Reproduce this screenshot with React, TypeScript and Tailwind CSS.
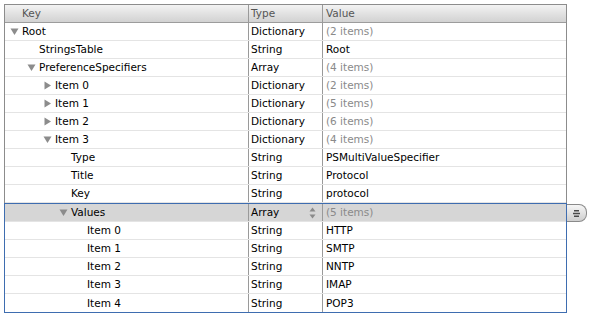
import React from 'react';

type Row = {
  key: string;
  level: number;
  toggle?: 'open' | 'closed';
  type: string;
  value: string;
  dim?: boolean;
};

const topRows: Row[] = [
  { key: 'Root', level: 0, toggle: 'open', type: 'Dictionary', value: '(2 items)', dim: true },
  { key: 'StringsTable', level: 1, type: 'String', value: 'Root' },
  { key: 'PreferenceSpecifiers', level: 1, toggle: 'open', type: 'Array', value: '(4 items)', dim: true },
  { key: 'Item 0', level: 2, toggle: 'closed', type: 'Dictionary', value: '(2 items)', dim: true },
  { key: 'Item 1', level: 2, toggle: 'closed', type: 'Dictionary', value: '(5 items)', dim: true },
  { key: 'Item 2', level: 2, toggle: 'closed', type: 'Dictionary', value: '(6 items)', dim: true },
  { key: 'Item 3', level: 2, toggle: 'open', type: 'Dictionary', value: '(4 items)', dim: true },
  { key: 'Type', level: 3, type: 'String', value: 'PSMultiValueSpecifier' },
  { key: 'Title', level: 3, type: 'String', value: 'Protocol' },
  { key: 'Key', level: 3, type: 'String', value: 'protocol' },
];

const valueRows: Row[] = ['HTTP', 'SMTP', 'NNTP', 'IMAP', 'POP3'].map((v, i) => ({
  key: `Item ${i}`,
  level: 4,
  type: 'String',
  value: v,
}));

const font = { fontFamily: '"DejaVu Sans", "Liberation Sans", sans-serif' };

// indent per level, triangle sits 12px left of text
const indents = ['pl-[5px]', 'pl-[22px]', 'pl-[38px]', 'pl-[54px]', 'pl-[70px]'];

function Disclosure({ state }: { state: 'open' | 'closed' }) {
  return (
    <svg width="9" height="9" viewBox="0 0 9 9" className="mr-[3px] shrink-0">
      {state === 'open' ? (
        <path d="M0.5 1.5 H8.5 L4.5 8 Z" fill="#8c8c8c" />
      ) : (
        <path d="M1.5 0.5 V8.5 L8 4.5 Z" fill="#8c8c8c" />
      )}
    </svg>
  );
}

function TreeRow({ row, selected, last }: { row: Row; selected?: boolean; last?: boolean }) {
  return (
    <div
      className={`relative grid grid-cols-[244px_74px_243px] h-[18px] text-[10.5px] leading-[17px] text-black ${
        last ? '' : 'border-b border-[#e4e4e4]'
      } ${selected ? 'bg-[#d6d6d6]' : 'bg-white'}`}
    >
      <div className={`flex items-center border-r border-[#9a9a9a] ${indents[row.level]}`}>
        {row.toggle ? <Disclosure state={row.toggle} /> : <span className="w-[12px] shrink-0" />}
        <span className="whitespace-nowrap">{row.key}</span>
      </div>
      <div className="relative flex items-center pl-[2px] border-r border-[#9a9a9a]">
        <span>{row.type}</span>
        {selected && (
          <svg width="7" height="12" viewBox="0 0 7 12" className="absolute right-[6px] top-[3px]">
            <path d="M0.5 4.5 L3.5 0.5 L6.5 4.5 Z" fill="#8a8a8a" />
            <path d="M0.5 7.5 L3.5 11.5 L6.5 7.5 Z" fill="#8a8a8a" />
          </svg>
        )}
      </div>
      <div className={`flex items-center pl-[3px] ${row.dim ? 'text-[#8a8a8a]' : ''}`}>
        <span className="whitespace-nowrap">{row.value}</span>
      </div>
      {selected && (
        <button className="absolute left-[562px] top-[0px] w-[20px] h-[18px] flex items-center justify-center rounded-r-[8px] border border-l-0 border-[#8a8a8a] bg-gradient-to-b from-[#f6f6f6] to-[#cfcfcf]">
          <svg width="9" height="7" viewBox="0 0 9 7">
            <path d="M2 0.75 H7 M1 3.5 H8 M2 6.25 H7" stroke="#4a4a4a" strokeWidth="1.3" />
          </svg>
        </button>
      )}
    </div>
  );
}

export default function App() {
  return (
    <div className="w-[590px] h-[317px] bg-white pt-[4px] pl-[4px]" style={font}>
      <div className="w-[563px]">
        {/* header + upper rows */}
        <div className="border-x border-t border-[#8c8c8c]">
          <div className="grid grid-cols-[244px_74px_243px] h-[18px] text-[10.5px] leading-[17px] text-[#555] border-b border-[#9c9c9c] bg-gradient-to-b from-[#f3f3f3] via-[#e2e2e2] to-[#d2d2d2]">
            <div className="pl-[17px] flex items-center border-r border-[#9a9a9a]">Key</div>
            <div className="pl-[2px] flex items-center border-r border-[#9a9a9a]">Type</div>
            <div className="pl-[3px] flex items-center">Value</div>
          </div>
          {topRows.map((r, i) => (
            <TreeRow key={i} row={r} />
          ))}
        </div>
        {/* selected subtree, blue outline */}
        <div className="border border-[#3e6db0]">
          <TreeRow
            row={{ key: 'Values', level: 3, toggle: 'open', type: 'Array', value: '(5 items)', dim: true }}
            selected
          />
          {valueRows.map((r, i) => (
            <TreeRow key={i} row={r} last={i === valueRows.length - 1} />
          ))}
        </div>
      </div>
    </div>
  );
}
